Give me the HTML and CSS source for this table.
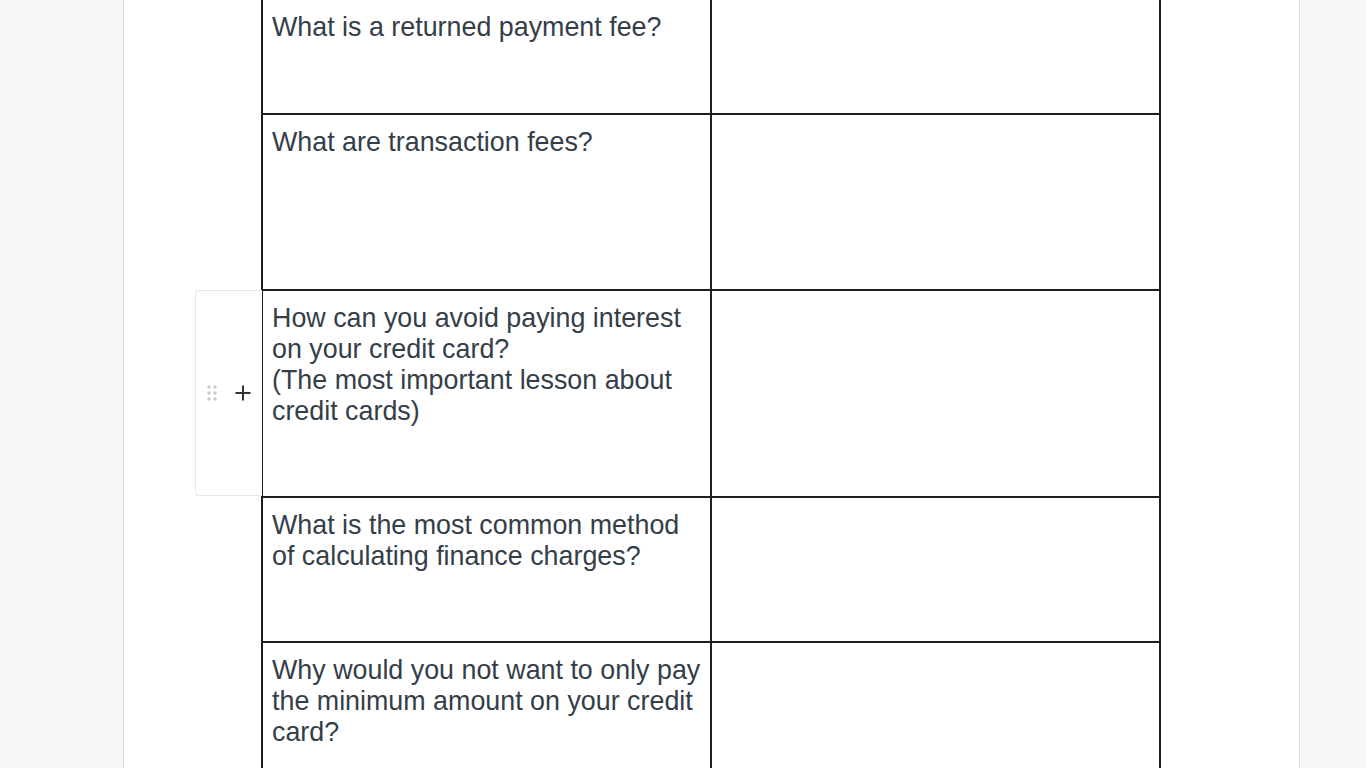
FILE: index.html
```html
<!DOCTYPE html>
<html lang="en">
<head>
<meta charset="utf-8">
<title>Credit card worksheet</title>
<link rel="stylesheet" href="styles.css">
</head>
<body>
<div class="page">
  <div class="sheet">
    <div class="table-wrap">
      <table class="qa">
        <tr class="r1">
          <td class="q">What is a returned payment fee?</td>
          <td class="a"></td>
        </tr>
        <tr class="r2">
          <td class="q">What are transaction fees?</td>
          <td class="a"></td>
        </tr>
        <tr class="r3">
          <td class="q">
            <div class="handle">
              <svg class="grip" width="12" height="18" viewBox="0 0 12 18">
                <circle cx="3" cy="3" r="1.8"/><circle cx="9" cy="3" r="1.8"/>
                <circle cx="3" cy="9" r="1.8"/><circle cx="9" cy="9" r="1.8"/>
                <circle cx="3" cy="15" r="1.8"/><circle cx="9" cy="15" r="1.8"/>
              </svg>
              <svg class="plus" width="18" height="18" viewBox="0 0 18 18">
                <path d="M9 1.5v15M1.5 9h15"/>
              </svg>
            </div>
            How can you avoid paying interest on your credit card?<br>(The most important lesson about credit cards)
          </td>
          <td class="a"></td>
        </tr>
        <tr class="r4">
          <td class="q">What is the most common method of calculating finance charges?</td>
          <td class="a"></td>
        </tr>
        <tr class="r5">
          <td class="q">Why would you not want to only pay the minimum amount on your credit card?</td>
          <td class="a"></td>
        </tr>
      </table>
    </div>
  </div>
</div>
</body>
</html>
```

FILE: styles.css
```css
html, body {
  margin: 0;
  padding: 0;
  height: 100%;
  overflow: hidden;
  background: #f6f7f8;
  font-family: "Liberation Sans", Arial, sans-serif;
}

.page {
  display: flex;
  height: 100%;
  padding-left: 123px;
}

.sheet {
  width: 1177px;
  background: #ffffff;
  border-left: 1px solid #dcdde0;
  border-right: 1px solid #dcdde0;
  height: 100%;
  box-sizing: border-box;
}

.table-wrap {
  padding-left: 137px;
  margin-top: -2px;
}

.qa {
  border-collapse: collapse;
  table-layout: fixed;
  width: 900px;
}

.qa td {
  border: 2px solid #1e1e1e;
  vertical-align: top;
  padding: 12px 4px 12px 9px;
  font-size: 26.85px;
  line-height: 31px;
  color: #343e49;
}

.qa td.q {
  position: relative;
}

.r1 { height: 115px; }
.r2 { height: 176px; }
.r3 { height: 207px; }
.r4 { height: 145px; }
.r5 { height: 180px; }

.handle {
  position: absolute;
  right: calc(100% + 1px);
  top: -1px;
  bottom: 0;
  width: 67px;
  box-sizing: border-box;
  border: 1px solid #e6e7e9;
  border-right: none;
  border-radius: 4px 0 0 4px;
  background: #ffffff;
  display: flex;
  align-items: center;
  padding-left: 10px;
  gap: 16px;
}

.grip circle {
  fill: #c9cacc;
}

.plus path {
  stroke: #333333;
  stroke-width: 2;
  fill: none;
}
```
